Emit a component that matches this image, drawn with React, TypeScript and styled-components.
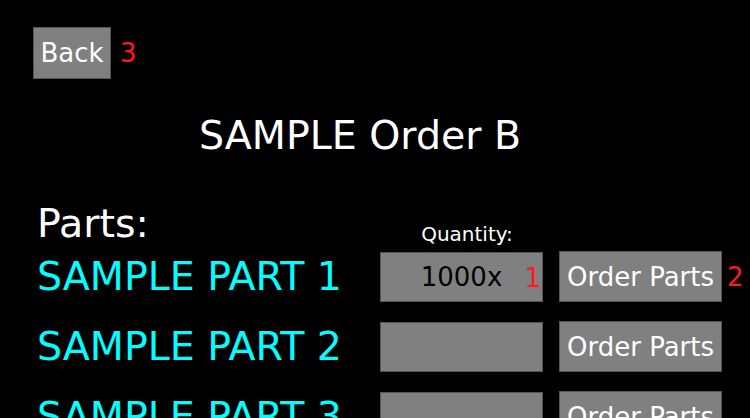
import React from "react";
import styled, { createGlobalStyle } from "styled-components";

const Global = createGlobalStyle`
  html, body { margin: 0; padding: 0; background: #000; }
  body { font-family: "DejaVu Sans", sans-serif; overflow: hidden; }
`;

const Page = styled.div`
  width: 750px;
  height: 418px;
  background: #000;
  box-sizing: border-box;
  padding: 27px 0 0 33px;
  overflow: hidden;
`;

const TopBar = styled.div`
  display: flex;
  align-items: center;
  gap: 9px;
`;

const GreyButton = styled.button<{ $w: number; $h: number }>`
  width: ${(p) => p.$w}px;
  height: ${(p) => p.$h}px;
  flex: none;
  box-sizing: border-box;
  background: #808080;
  border: 1px solid #555;
  color: #fff;
  font-family: "DejaVu Sans", sans-serif;
  font-size: 26px;
  line-height: 1;
  padding: 0;
  margin: 0;
  display: flex;
  align-items: center;
  justify-content: center;
`;

const Marker = styled.span`
  color: #ff1a1a;
  font-size: 26px;
  line-height: 1;
`;

const Title = styled.h1`
  margin: 37px 0 0 166px;
  font-weight: normal;
  font-size: 39.5px;
  line-height: 39px;
  color: #fff;
`;

const Grid = styled.div`
  display: grid;
  grid-template-columns: 343px 179px 1fr;
  row-gap: 19px;
  margin: 49px 0 0 4px;
  align-items: center;
`;

const Header = styled.div`
  grid-column: 1 / -1;
  display: grid;
  grid-template-columns: 343px 163px;
  height: 40px;
  margin-bottom: -12px;
`;

const PartsLabel = styled.div`
  color: #fff;
  font-size: 39.5px;
  line-height: 39px;
`;

const QtyLabel = styled.div`
  color: #fff;
  font-size: 20px;
  line-height: 20px;
  align-self: end;
  text-align: center;
  padding-left: 11px;
`;

const PartName = styled.div`
  color: #00ffff;
  font-size: 39.5px;
  line-height: 39px;
  white-space: nowrap;
`;

const QtyBox = styled.div`
  position: relative;
  width: 163px;
  height: 50px;
  box-sizing: border-box;
  background: #808080;
  border: 1px solid #555;
  color: #000;
  font-size: 26px;
  display: flex;
  align-items: center;
  justify-content: center;
`;

const BoxMarker = styled(Marker)`
  position: absolute;
  right: 1px;
  top: 12px;
`;

const OrderCell = styled.div`
  display: flex;
  align-items: center;
  gap: 5px;
`;

const parts = [
  { name: "SAMPLE PART 1", qty: "1000x", m1: "1", m2: "2" },
  { name: "SAMPLE PART 2", qty: "", m1: "", m2: "" },
  { name: "SAMPLE PART 3", qty: "", m1: "", m2: "" },
];

export default function App() {
  return (
    <>
      <Global />
      <Page>
        <TopBar>
          <GreyButton $w={78} $h={52}>Back</GreyButton>
          <Marker>3</Marker>
        </TopBar>
        <Title>SAMPLE Order B</Title>
        <Grid>
          <Header>
            <PartsLabel>Parts:</PartsLabel>
            <QtyLabel>Quantity:</QtyLabel>
          </Header>
          {parts.map((p) => (
            <React.Fragment key={p.name}>
              <PartName>{p.name}</PartName>
              <QtyBox>
                {p.qty}
                {p.m1 && <BoxMarker>{p.m1}</BoxMarker>}
              </QtyBox>
              <OrderCell>
                <GreyButton $w={163} $h={51}>Order Parts</GreyButton>
                {p.m2 && <Marker>{p.m2}</Marker>}
              </OrderCell>
            </React.Fragment>
          ))}
        </Grid>
      </Page>
    </>
  );
}
